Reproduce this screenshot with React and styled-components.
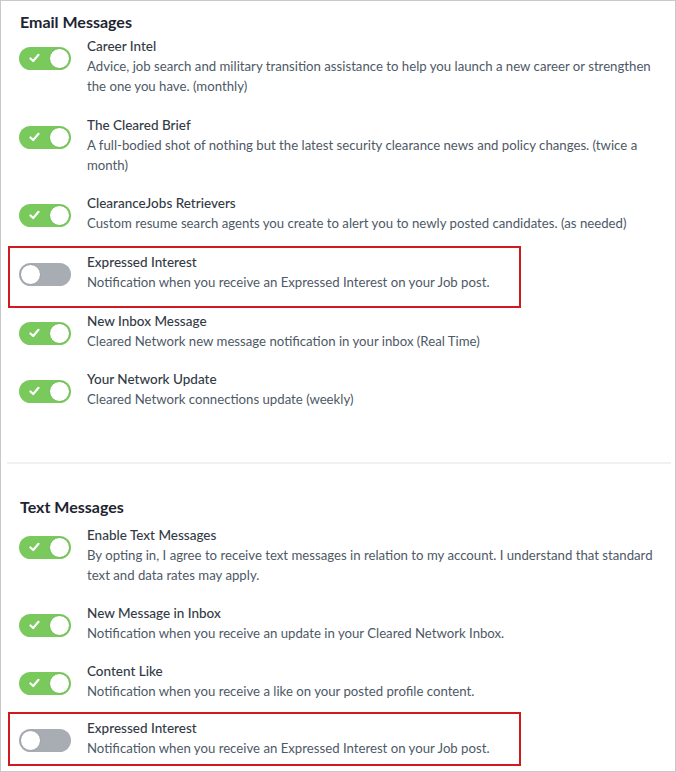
import React from "react";
import styled, { createGlobalStyle } from "styled-components";

const GlobalStyle = createGlobalStyle`
  html, body {
    margin: 0;
    padding: 0;
    background: #fff;
  }
  body {
    font-family: "Source Sans Pro", "Lato", "Open Sans", sans-serif;
  }
`;

const Panel = styled.div`
  box-sizing: border-box;
  width: 676px;
  height: 772px;
  border: 1px solid #c9c9c9;
  padding: 11px 0 0 0;
  overflow: hidden;
  background: #fff;
`;

const Section = styled.section`
  padding: 0 0 0 18px;
`;

const Heading = styled.h2`
  margin: 0 0 ${p => p.$gap}px 1px;
  font-size: 16px;
  line-height: 20px;
  font-weight: 700;
  color: #1d2430;
`;

const List = styled.div`
  display: flex;
  flex-direction: column;
  gap: ${p => p.$gap}px;
`;

const Row = styled.div`
  position: relative;
  display: flex;
  align-items: flex-start;
  gap: 16px;
  padding-right: 12px;

  ${p =>
    p.$marked &&
    `
    &::after {
      content: "";
      position: absolute;
      left: -11px;
      top: -6px;
      width: 509px;
      bottom: ${p.$markBottom}px;
      border: 2px solid #d11a1f;
      pointer-events: none;
    }
  `}
`;

const Track = styled.span`
  flex: none;
  position: relative;
  box-sizing: border-box;
  width: 52px;
  height: 23px;
  margin-top: 11px;
  border-radius: 12px;
  background: ${p => (p.$on ? "#79c95c" : "#a8adb3")};
`;

const Knob = styled.span`
  position: absolute;
  top: 1px;
  ${p => (p.$on ? "right: 1px;" : "left: 1px;")}
  box-sizing: border-box;
  width: 21px;
  height: 21px;
  border-radius: 50%;
  background: #fff;
  border: 1px solid ${p => (p.$on ? "#6dbb51" : "#9aa0a6")};
`;

const Check = styled.svg`
  position: absolute;
  left: 10px;
  top: 6px;
`;

const Text = styled.div`
  display: flex;
  flex-direction: column;
`;

const Title = styled.div`
  font-size: 13.5px;
  line-height: 20px;
  font-weight: 500;
  color: #333a45;
`;

const Desc = styled.div`
  font-size: 13.2px;
  line-height: 20px;
  color: #4e5966;
`;

const Divider = styled.hr`
  margin: 53px 4px 33px 6px;
  border: none;
  border-top: 2px solid #f1f1f1;
`;

const Toggle = ({ on }) => (
  <Track $on={on}>
    {on && (
      <Check width="11" height="10" viewBox="0 0 11 10">
        <path
          d="M1.5 5.5 L4.2 8 L9.5 1.8"
          fill="none"
          stroke="#fff"
          strokeWidth="2.2"
          strokeLinecap="round"
          strokeLinejoin="round"
        />
      </Check>
    )}
    <Knob $on={on} />
  </Track>
);

const Item = ({ item }) => (
  <Row $marked={item.marked} $markBottom={item.markBottom}>
    <Toggle on={item.on} />
    <Text>
      <Title>{item.title}</Title>
      <Desc>{item.desc}</Desc>
    </Text>
  </Row>
);

const email = [
  {
    title: "Career Intel",
    desc: "Advice, job search and military transition assistance to help you launch a new career or strengthen the one you have. (monthly)",
    on: true
  },
  {
    title: "The Cleared Brief",
    desc: "A full-bodied shot of nothing but the latest security clearance news and policy changes. (twice a month)",
    on: true
  },
  {
    title: "ClearanceJobs Retrievers",
    desc: "Custom resume search agents you create to alert you to newly posted candidates. (as needed)",
    on: true
  },
  {
    title: "Expressed Interest",
    desc: "Notification when you receive an Expressed Interest on your Job post.",
    on: false,
    marked: true,
    markBottom: -16
  },
  {
    title: "New Inbox Message",
    desc: "Cleared Network new message notification in your inbox (Real Time)",
    on: true
  },
  {
    title: "Your Network Update",
    desc: "Cleared Network connections update (weekly)",
    on: true
  }
];

const text = [
  {
    title: "Enable Text Messages",
    desc: "By opting in, I agree to receive text messages in relation to my account. I understand that standard text and data rates may apply.",
    on: true
  },
  {
    title: "New Message in Inbox",
    desc: "Notification when you receive an update in your Cleared Network Inbox.",
    on: true
  },
  {
    title: "Content Like",
    desc: "Notification when you receive a like on your posted profile content.",
    on: true
  },
  {
    title: "Expressed Interest",
    desc: "Notification when you receive an Expressed Interest on your Job post.",
    on: false,
    marked: true,
    markBottom: -8
  }
];

export default function App() {
  return (
    <>
      <GlobalStyle />
      <Panel>
        <Section>
          <Heading $gap={4}>Email Messages</Heading>
          <List $gap={18.7}>
            {email.map((item, i) => (
              <Item key={i} item={item} />
            ))}
          </List>
        </Section>
        <Divider />
        <Section>
          <Heading $gap={8}>Text Messages</Heading>
          <List $gap={17.6}>
            {text.map((item, i) => (
              <Item key={i} item={item} />
            ))}
          </List>
        </Section>
      </Panel>
    </>
  );
}
